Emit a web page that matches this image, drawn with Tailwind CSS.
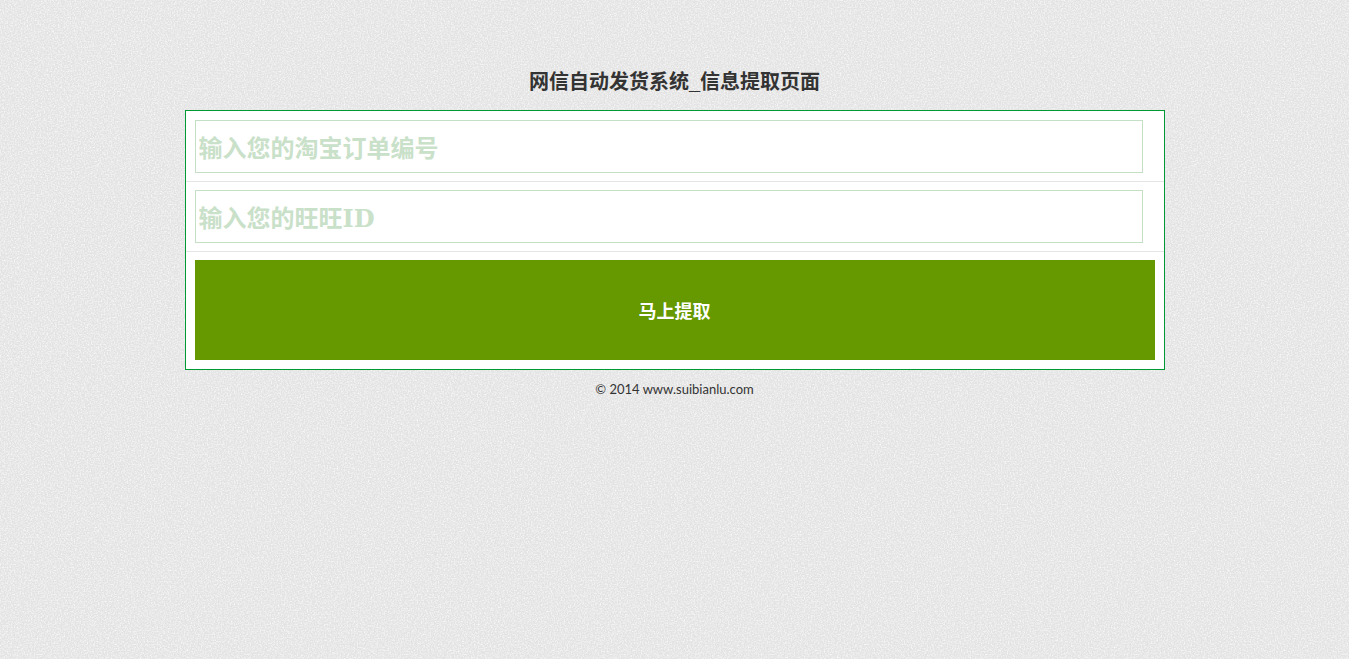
<!DOCTYPE html>
<html lang="zh-CN">
<head>
<meta charset="utf-8">
<title>信息提取页面</title>
<script src="https://cdn.jsdelivr.net/npm/@tailwindcss/browser@4"></script>
</head>
<body class="relative h-[659px] overflow-hidden bg-[#e3e3e3] font-['Lato','Noto_Sans_CJK_SC',sans-serif]">
<svg class="absolute inset-0 w-full h-full" aria-hidden="true">
  <filter id="n" x="0" y="0" width="100%" height="100%">
    <feTurbulence type="fractalNoise" baseFrequency="0.7" numOctaves="2" seed="4"/>
    <feColorMatrix type="matrix" values="0 0 0 0 1  0 0 0 0 1  0 0 0 0 1  1.6 0 0 0 -0.62"/>
  </filter>
  <rect width="100%" height="100%" filter="url(#n)"/>
</svg>
<main class="relative flex flex-col items-center pt-[68px]">
  <h1 class="h-[42px] text-[20px] leading-[28px] font-bold text-[#333] font-['Liberation_Sans','Noto_Sans_CJK_SC',sans-serif]">网信自动发货系统_信息提取页面</h1>
  <form class="w-[980px] h-[260px] bg-white border border-[#009933] flex flex-col">
    <div class="h-[71px] pt-[9px] pl-[9px] border-b border-[#e5e5e5]">
      <input class="block w-[948px] h-[53px] pt-[4px] pl-[3px] pr-[2px] border border-[#c5dfc5] outline-none text-[24px] font-bold font-['DejaVu_Serif','Noto_Sans_CJK_SC',serif] placeholder:text-[#c9e0c9] placeholder:opacity-100" placeholder="输入您的淘宝订单编号">
    </div>
    <div class="h-[70px] pt-[8px] pl-[9px] border-b border-[#e5e5e5]">
      <input class="block w-[948px] h-[53px] pt-[4px] pl-[3px] pr-[2px] border border-[#c5dfc5] outline-none text-[24px] font-bold font-['DejaVu_Serif','Noto_Sans_CJK_SC',serif] placeholder:text-[#c9e0c9] placeholder:opacity-100" placeholder="输入您的旺旺ID">
    </div>
    <div class="pt-[8px] pl-[9px]">
      <button type="button" class="block w-[960px] h-[100px] pt-[2px] bg-[#669900] text-white text-[18px] font-bold">马上提取</button>
    </div>
  </form>
  <p class="mt-[10px] text-[13px] leading-[18px] text-[#333]">© 2014 www.suibianlu.com</p>
</main>
</body>
</html>
